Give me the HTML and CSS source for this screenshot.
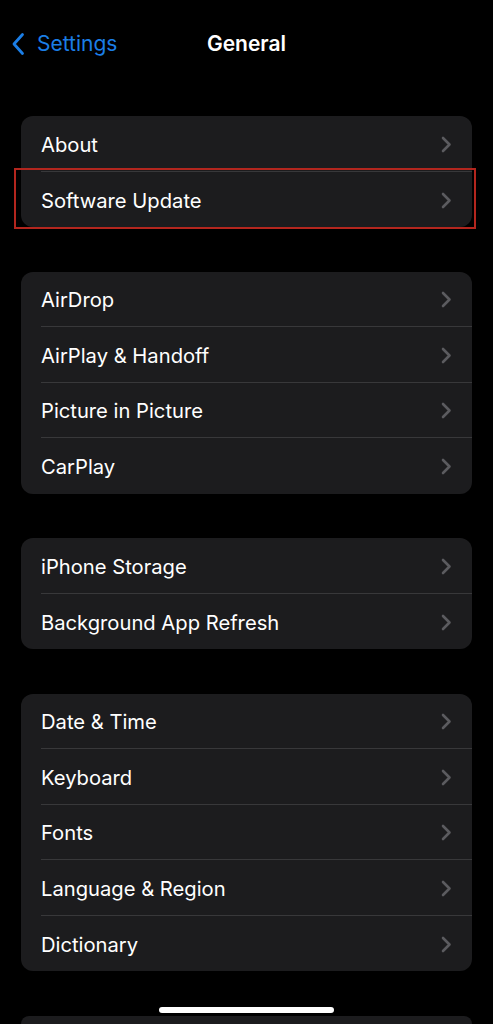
FILE: index.html
```html
<!DOCTYPE html>
<html lang="en">

<head>
    <meta charset="UTF-8">
    <title>General</title>
    <link rel="stylesheet" href="styles.css">
</head>

<body>
    <div class="nav">
        <a class="back">
            <svg width="14" height="24" viewBox="0 0 14 24"><path d="M11.5 2.5 L3 12 L11.5 21.5" fill="none" stroke="#1b7ee6" stroke-width="2.8" stroke-linecap="round" stroke-linejoin="round"/></svg>
            <span>Settings</span>
        </a>
        <h1 class="title">General</h1>
    </div>

    <div class="content">
        <ul class="group">
            <li><span>About</span><svg class="chev" viewBox="0 0 11 17"><path d="M2 2 L8.5 8.5 L2 15"/></svg></li>
            <li class="marked"><span>Software Update</span><svg class="chev" viewBox="0 0 11 17"><path d="M2 2 L8.5 8.5 L2 15"/></svg></li>
        </ul>
        <ul class="group">
            <li><span>AirDrop</span><svg class="chev" viewBox="0 0 11 17"><path d="M2 2 L8.5 8.5 L2 15"/></svg></li>
            <li><span>AirPlay &amp; Handoff</span><svg class="chev" viewBox="0 0 11 17"><path d="M2 2 L8.5 8.5 L2 15"/></svg></li>
            <li><span>Picture in Picture</span><svg class="chev" viewBox="0 0 11 17"><path d="M2 2 L8.5 8.5 L2 15"/></svg></li>
            <li><span>CarPlay</span><svg class="chev" viewBox="0 0 11 17"><path d="M2 2 L8.5 8.5 L2 15"/></svg></li>
        </ul>
        <ul class="group">
            <li><span>iPhone Storage</span><svg class="chev" viewBox="0 0 11 17"><path d="M2 2 L8.5 8.5 L2 15"/></svg></li>
            <li><span>Background App Refresh</span><svg class="chev" viewBox="0 0 11 17"><path d="M2 2 L8.5 8.5 L2 15"/></svg></li>
        </ul>
        <ul class="group">
            <li><span>Date &amp; Time</span><svg class="chev" viewBox="0 0 11 17"><path d="M2 2 L8.5 8.5 L2 15"/></svg></li>
            <li><span>Keyboard</span><svg class="chev" viewBox="0 0 11 17"><path d="M2 2 L8.5 8.5 L2 15"/></svg></li>
            <li><span>Fonts</span><svg class="chev" viewBox="0 0 11 17"><path d="M2 2 L8.5 8.5 L2 15"/></svg></li>
            <li><span>Language &amp; Region</span><svg class="chev" viewBox="0 0 11 17"><path d="M2 2 L8.5 8.5 L2 15"/></svg></li>
            <li><span>Dictionary</span><svg class="chev" viewBox="0 0 11 17"><path d="M2 2 L8.5 8.5 L2 15"/></svg></li>
        </ul>
        <div class="group tail"></div>
    </div>

    <div class="home"></div>
</body>

</html>
```

FILE: styles.css
```css
* {
    margin: 0;
    padding: 0;
    list-style: none;
    font-style: normal;
    box-sizing: border-box;
}

html,
body {
    background: #000;
    height: 1024px;
    overflow: hidden;
}

body {
    font-family: Inter, "Noto Sans", sans-serif;
    color: #fff;
}

.nav {
    height: 88px;
    position: relative;
    display: flex;
    align-items: center;
    justify-content: center;
}

.back {
    position: absolute;
    left: 11px;
    top: 32px;
    display: flex;
    align-items: center;
    gap: 12px;
    color: #1b7ee6;
    font-size: 21px;
    line-height: 24px;
}

.title {
    font-size: 21px;
    font-weight: 600;
    line-height: 24px;
}

.content {
    padding: 28px 21px 0;
    display: flex;
    flex-direction: column;
    gap: 44.5px;
}

.group {
    background: #1c1c1e;
    border-radius: 12px;
}

.group li {
    height: 55.5px;
    margin-left: 20px;
    padding: 2px 20px 0 0;
    display: flex;
    align-items: center;
    justify-content: space-between;
    font-size: 20.2px;
    border-bottom: 1px solid #38383a;
    position: relative;
}

.group li:last-child {
    border-bottom: none;
}

.chev {
    width: 11px;
    height: 17px;
    fill: none;
    stroke: #5b5b5f;
    stroke-width: 2.6;
    stroke-linecap: round;
    stroke-linejoin: round;
}

.tail {
    height: 8px;
    border-radius: 12px 12px 0 0;
}

.marked::after {
    content: "";
    position: absolute;
    left: -27px;
    right: -4px;
    top: -4px;
    bottom: -2px;
    border: 2px solid #b3261e;
}

.home {
    position: absolute;
    left: 159px;
    top: 1007px;
    width: 175px;
    height: 6px;
    border-radius: 3px;
    background: #fff;
}
```
